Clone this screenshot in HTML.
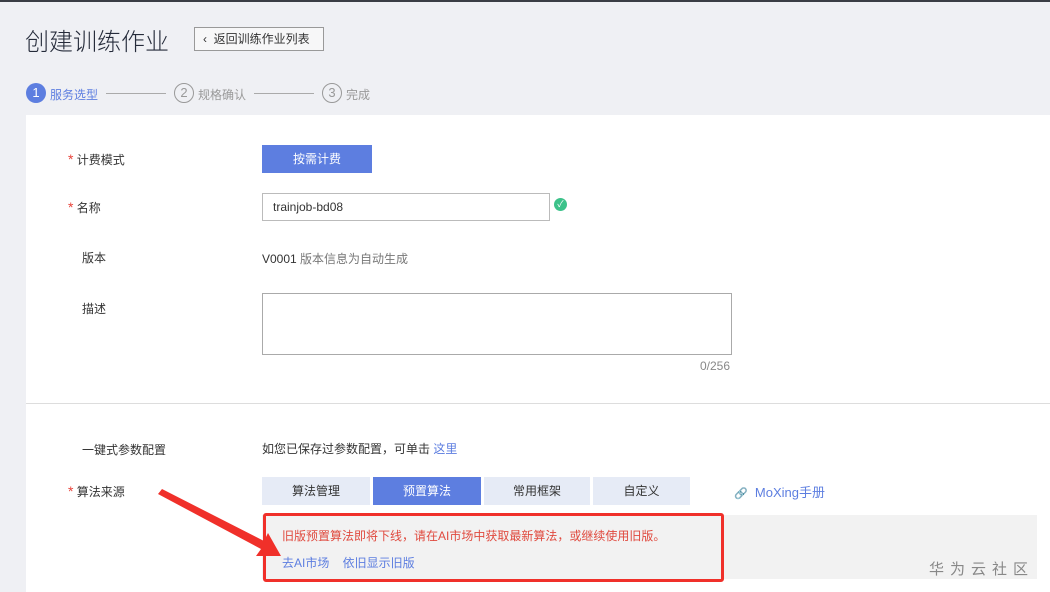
<!DOCTYPE html>
<html><head><meta charset="utf-8"><style>
*{margin:0;padding:0;box-sizing:border-box}
body{width:1050px;height:592px;overflow:hidden;background:#eff0f4;font-family:"Liberation Sans","Noto Sans CJK SC",sans-serif;font-size:12px;color:#333;position:relative}
.a{position:absolute}
.topline{left:0;top:0;width:1050px;height:2px;background:#3a3d45}
.panel{left:26px;top:115px;width:1024px;height:477px;background:#fff}
.lbl{font-size:12px;color:#333}
.star{color:#e8433a;font-size:14px}
.tab{top:477px;height:28px;background:#e6ebf6;color:#333;text-align:center;line-height:28px;font-size:12px}
</style></head><body>
<div class="a topline"></div>
<div class="a" style="left:25px;top:22px;font-size:24px;color:#252b3a;font-weight:300">创建训练作业</div>
<div class="a" style="left:194px;top:27px;width:130px;height:24px;border:1px solid #999;background:#f7f7f8;font-size:12px;line-height:22px;padding-left:8px;color:#333">‹&nbsp; 返回训练作业列表</div>
<div class="a" style="left:26px;top:83px;width:20px;height:20px;border-radius:50%;background:#5d7ee0;color:#fff;text-align:center;line-height:20px;font-size:13px">1</div>
<div class="a" style="left:50px;top:86px;color:#5d7ee0">服务选型</div>
<div class="a" style="left:106px;top:93px;width:60px;height:1px;background:#aaa"></div>
<div class="a" style="left:174px;top:83px;width:20px;height:20px;border-radius:50%;border:1px solid #999;color:#999;text-align:center;line-height:18px;font-size:13px">2</div>
<div class="a" style="left:198px;top:86px;color:#999">规格确认</div>
<div class="a" style="left:254px;top:93px;width:60px;height:1px;background:#aaa"></div>
<div class="a" style="left:322px;top:83px;width:20px;height:20px;border-radius:50%;border:1px solid #999;color:#999;text-align:center;line-height:18px;font-size:13px">3</div>
<div class="a" style="left:346px;top:86px;color:#999">完成</div>
<div class="a panel"></div>
<div class="a" style="left:26px;top:403px;width:1024px;height:1px;background:#ddd"></div>
<div class="a lbl" style="left:68px;top:151px"><span class="star">*</span> 计费模式</div>
<div class="a" style="left:262px;top:145px;width:110px;height:28px;background:#5d7ee0;color:#fff;text-align:center;line-height:28px">按需计费</div>
<div class="a lbl" style="left:68px;top:199px"><span class="star">*</span> 名称</div>
<div class="a" style="left:262px;top:193px;width:288px;height:28px;border:1px solid #bbb;line-height:26px;padding-left:10px">trainjob-bd08</div>
<div class="a" style="left:554px;top:198px;width:13px;height:13px;border-radius:50%;background:#3cc28a;color:#fff;font-size:9px;line-height:13px;text-align:center">✓</div>
<div class="a lbl" style="left:82px;top:249px">版本</div>
<div class="a" style="left:262px;top:250px">V0001 <span style="color:#777">版本信息为自动生成</span></div>
<div class="a lbl" style="left:82px;top:300px">描述</div>
<div class="a" style="left:262px;top:293px;width:470px;height:62px;border:1px solid #aaa"></div>
<div class="a" style="left:700px;top:359px;color:#888">0/256</div>
<div class="a lbl" style="left:82px;top:441px">一键式参数配置</div>
<div class="a" style="left:262px;top:440px">如您已保存过参数配置，可单击 <span style="color:#5d7ee0">这里</span></div>
<div class="a lbl" style="left:68px;top:483px"><span class="star">*</span> 算法来源</div>
<div class="a tab" style="left:262px;width:108px">算法管理</div>
<div class="a tab" style="left:373px;width:108px;background:#5d7ee0;color:#fff">预置算法</div>
<div class="a tab" style="left:484px;width:106px">常用框架</div>
<div class="a tab" style="left:593px;width:97px">自定义</div>
<div class="a" style="left:734px;top:482px;color:#5d7ee0;font-size:13px"><span style="color:#888;font-size:11px">🔗</span>&nbsp; MoXing手册</div>
<div class="a" style="left:262px;top:515px;width:775px;height:64px;background:#f2f2f2"></div>
<div class="a" style="left:263px;top:513px;width:461px;height:69px;border:3px solid #f0302a;border-radius:3px"></div>
<div class="a" style="left:282px;top:527px;color:#e04a3f">旧版预置算法即将下线，请在AI市场中获取最新算法，或继续使用旧版。</div>
<div class="a" style="left:282px;top:554px;color:#5d7ee0">去AI市场&nbsp;&nbsp;&nbsp; 依旧显示旧版</div>
<div class="a" style="left:929px;top:558px;color:#888;font-size:15px;letter-spacing:6px">华为云社区</div>
<svg class="a" style="left:0;top:0" width="1050" height="592"><polygon points="158,494 162,489 264,541 268,533 281,556 256,556 261,549" fill="#f0302a"/></svg>
</body></html>
